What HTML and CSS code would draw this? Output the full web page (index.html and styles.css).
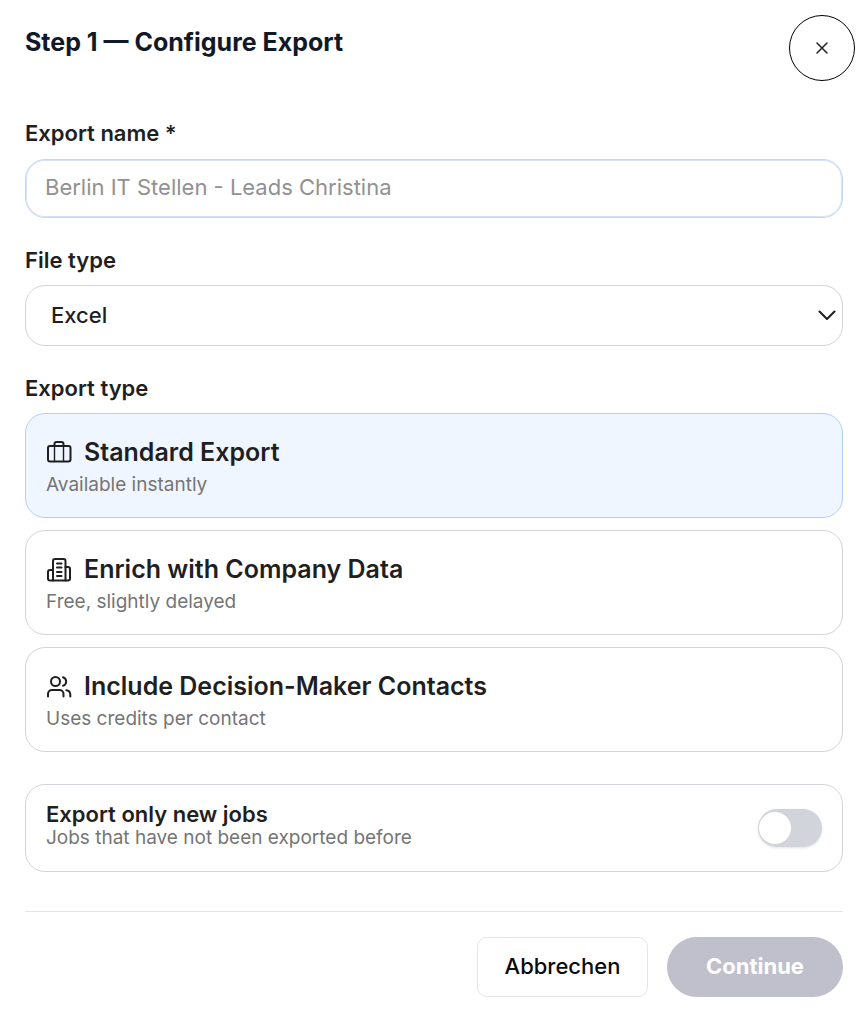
FILE: index.html
```html
<!DOCTYPE html>
<html lang="en">
<head>
  <meta charset="UTF-8" />
  <meta name="viewport" content="width=device-width, initial-scale=1.0"/>
  <title>Configure Export</title>
  <link rel="stylesheet" href="styles.css">
</head>
<body>

  <!-- Header -->
  <header class="modal-header">
    <h1>Step 1 — Configure Export</h1>
    <button type="button" class="close-btn" aria-label="Close">
      <svg viewBox="0 0 14 14" width="14" height="14"><path d="M2 2l10 10M12 2L2 12"/></svg>
    </button>
  </header>

  <form class="export-form">
    <label class="label" for="export-name">Export name *</label>
    <input type="text" class="text-input" id="export-name" placeholder="Berlin IT Stellen - Leads Christina" />

    <label class="label" for="file-type">File type</label>
    <div class="select-wrap">
      <select id="file-type">
        <option>Excel</option>
        <option>CSV</option>
      </select>
      <svg class="chevron" viewBox="0 0 18 10" width="18" height="10"><path d="M1.5 1.5L9 9l7.500-7.500"/></svg>
    </div>

    <!-- Export type -->
    <fieldset class="export-types">
      <legend class="label">Export type</legend>

      <label class="card">
        <input type="radio" name="export-type" value="standard" checked />
        <span class="card-title">
          <svg class="icon" viewBox="0 0 26 26">
            <rect x="2" y="7" width="22.500" height="15.500" rx="2"/>
            <path d="M8.500 7V5a2 2 0 0 1 2-2h5a2 2 0 0 1 2 2v2"/>
            <path class="thin" d="M8.500 7v15.500M17.500 7v15.500"/>
          </svg>
          Standard Export
        </span>
        <span class="card-text">Available instantly</span>
      </label>

      <label class="card">
        <input type="radio" name="export-type" value="company" />
        <span class="card-title">
          <svg class="icon" viewBox="0 0 26 26">
            <path d="M7 24.500V5a2 2 0 0 1 2-2h8.500a2 2 0 0 1 2 2v19.500"/>
            <path d="M7 14H4a2 2 0 0 0-2 2v6.500a2 2 0 0 0 2 2h18a2 2 0 0 0 2-2V13a2 2 0 0 0-2-2h-2.500"/>
            <path d="M11 7.500h4.500M11 11.500h4.500M11 16h4.500M11 20h4.500"/>
          </svg>
          Enrich with Company Data
        </span>
        <span class="card-text">Free, slightly delayed</span>
      </label>

      <label class="card">
        <input type="radio" name="export-type" value="contacts" />
        <span class="card-title">
          <svg class="icon" viewBox="0 0 26 26">
            <circle cx="9.500" cy="8.500" r="4.500"/>
            <path d="M2 23.500V21a4 4 0 0 1 4-4h7.500a4 4 0 0 1 4 4v2.500"/>
            <path d="M17 4.200a4.500 4.500 0 0 1 0 8.600M24.300 23.500V21.500a4.500 4.500 0 0 0-4-4.300"/>
          </svg>
          Include Decision-Maker Contacts
        </span>
        <span class="card-text">Uses credits per contact</span>
      </label>
    </fieldset>

    <!-- New jobs toggle -->
    <div class="toggle-row">
      <label class="toggle-label" for="only-new">
        <span class="toggle-title">Export only new jobs</span>
        <span class="toggle-text">Jobs that have not been exported before</span>
      </label>
      <input type="checkbox" class="switch" id="only-new" />
    </div>

    <div class="actions">
      <button type="button" class="btn-cancel">Abbrechen</button>
      <button type="submit" class="btn-continue" disabled>Continue</button>
    </div>
  </form>

</body>
</html>
```
FILE: styles.css
```css
* {
  box-sizing: border-box;
  margin: 0;
  padding: 0;
}

body {
  font-family: Inter, sans-serif;
  background: #fff;
  color: #1f1f1f;
}

button, input, select {
  font-family: inherit;
}

svg {
  fill: none;
  stroke: #1f1f1f;
  stroke-width: 2;
  stroke-linecap: round;
  stroke-linejoin: round;
}

.modal-header {
  display: flex;
  justify-content: space-between;
  align-items: flex-start;
  padding: 15px 13px 0 25px;
}

h1 {
  font-size: 25px;
  font-weight: 700;
  line-height: 54px;
  color: #111827;
}

.close-btn {
  display: flex;
  align-items: center;
  justify-content: center;
  width: 66px;
  height: 66px;
  background: #fff;
  border: 1px solid #000;
  border-radius: 50%;
  cursor: pointer;
}

.close-btn svg {
  stroke-width: 1.5;
}

.export-form {
  padding: 36px 25px 23px;
}

.label {
  display: block;
  margin-bottom: 9px;
  font-size: 22px;
  font-weight: 600;
  line-height: 32px;
}

.text-input {
  display: block;
  width: 100%;
  height: 59px;
  margin: 10px 0 26px;
  padding: 0 19px 3px;
  font-size: 22px;
  border: 1px solid #c6d5f6;
  border-radius: 20px;
  box-shadow: inset 0 0 0 1px #d6e2fa;
  outline: none;
}

.text-input::placeholder {
  color: #919191;
}

.select-wrap {
  position: relative;
  margin-bottom: 26px;
}

select {
  display: block;
  width: 100%;
  height: 61px;
  padding: 0 25px 2px;
  font-size: 22px;
  font-weight: 500;
  color: #1f1f1f;
  background: #fff;
  border: 1px solid #d4d4da;
  border-radius: 20px;
  appearance: none;
}

.chevron {
  position: absolute;
  top: 25px;
  right: 7px;
  pointer-events: none;
}

.export-types {
  border: none;
}

.card {
  display: block;
  position: relative;
  margin-bottom: 12px;
  padding: 20px 20px 18px;
  border: 1px solid #d4d4da;
  border-radius: 20px;
  cursor: pointer;
}

.card:has(input:checked) {
  background: #eff6ff;
  border-color: #b3cdfa;
}

.card input {
  position: absolute;
  opacity: 0;
}

.card-title {
  display: flex;
  align-items: center;
  gap: 12px;
  font-size: 25px;
  font-weight: 600;
  line-height: 36px;
}

.icon {
  width: 26px;
  height: 26px;
}

.icon .thin {
  stroke-width: 1.4;
}

.card-text {
  display: block;
  font-size: 19px;
  line-height: 29px;
  color: #757575;
}

.toggle-row {
  display: flex;
  align-items: center;
  justify-content: space-between;
  margin-top: 20px;
  padding: 17px 20px;
  border: 1px solid #d4d4da;
  border-radius: 20px;
}

.toggle-label {
  padding-bottom: 4px;
  line-height: 24px;
}

.toggle-title {
  display: block;
  font-size: 22px;
  font-weight: 600;
}

.toggle-text {
  display: block;
  font-size: 19px;
  color: #757575;
}

.switch {
  width: 64px;
  height: 38px;
  padding: 3px 1px;
  background: #d1d5db;
  border-radius: 19px;
  box-shadow: 0 1px 3px rgba(0, 0, 0, 0.12);
  appearance: none;
  cursor: pointer;
}

.switch::before {
  content: "";
  display: block;
  width: 32px;
  height: 32px;
  background: #fff;
  border-radius: 50%;
}

.switch:checked {
  padding-left: 31px;
  background: #2563eb;
}

.actions {
  display: flex;
  justify-content: flex-end;
  gap: 19px;
  margin-top: 39px;
  padding-top: 25px;
  border-top: 1px solid #e5e5e5;
}

.actions button {
  height: 60px;
  padding-bottom: 2px;
  font-size: 22px;
}

.btn-cancel {
  width: 171px;
  font-weight: 500;
  color: #0a0a0a;
  background: #fff;
  border: 1px solid #e5e5e5;
  border-radius: 10px;
}

.btn-continue {
  width: 176px;
  font-weight: 700;
  color: #fff;
  background: #c0bfcc;
  border: none;
  border-radius: 30px;
}
```
